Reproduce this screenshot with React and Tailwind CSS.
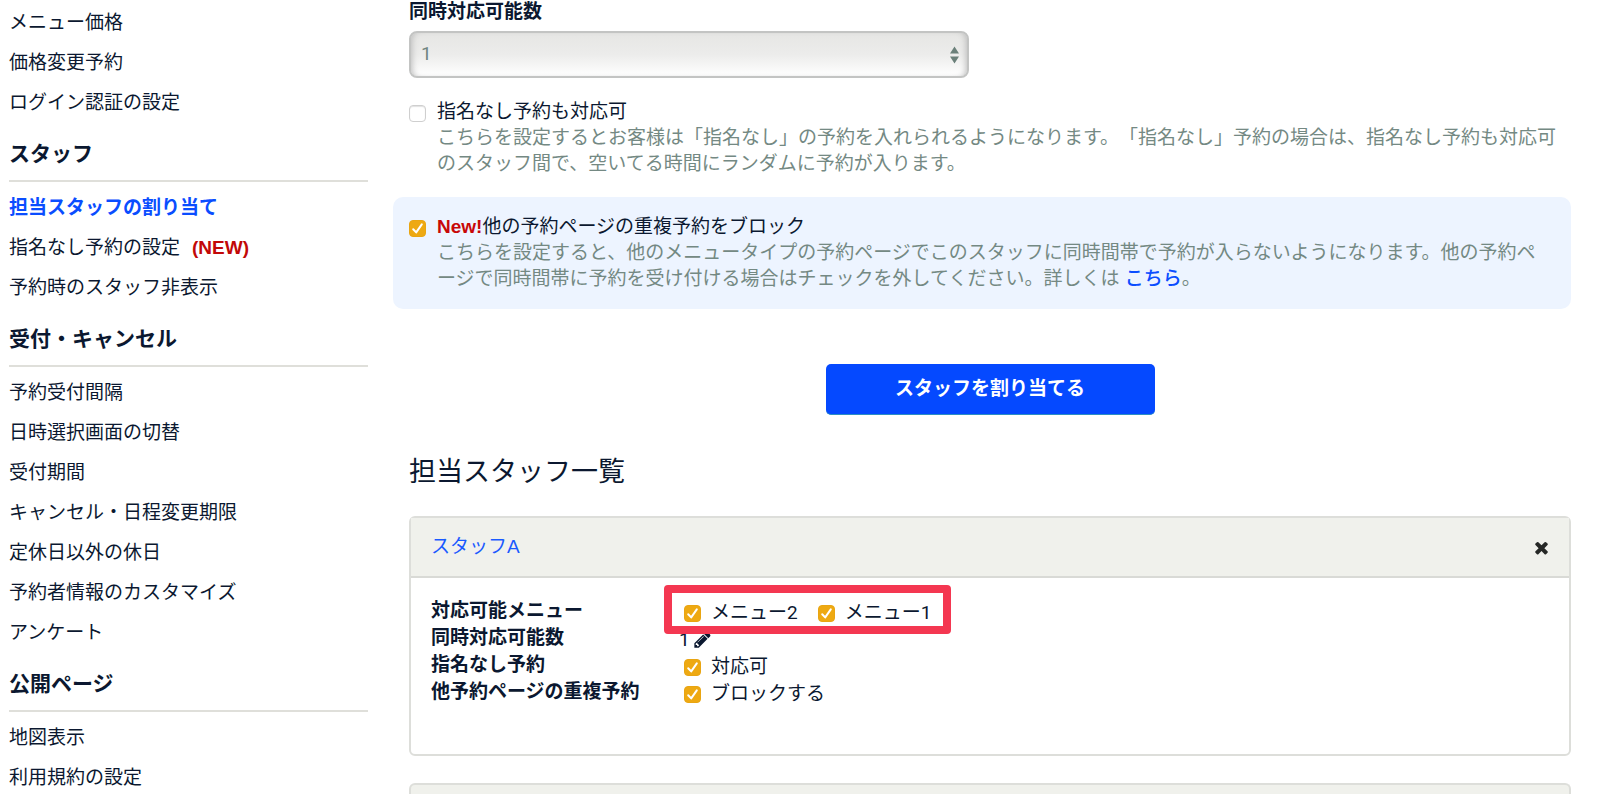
import React, { useState } from 'react'

const menuSections = [
  {
    title: null,
    items: [{ label: 'メニュー価格' }, { label: '価格変更予約' }, { label: 'ログイン認証の設定' }],
  },
  {
    title: 'スタッフ',
    items: [
      { label: '担当スタッフの割り当て', active: true },
      { label: '指名なし予約の設定', isNew: true },
      { label: '予約時のスタッフ非表示' },
    ],
  },
  {
    title: '受付・キャンセル',
    items: [
      { label: '予約受付間隔' },
      { label: '日時選択画面の切替' },
      { label: '受付期間' },
      { label: 'キャンセル・日程変更期限' },
      { label: '定休日以外の休日' },
      { label: '予約者情報のカスタマイズ' },
      { label: 'アンケート' },
    ],
  },
  {
    title: '公開ページ',
    items: [{ label: '地図表示' }, { label: '利用規約の設定' }],
  },
]

function App() {
  return (
    <div
      lang="ja"
      className="flex bg-white pb-2 pl-[9px] pr-[33px] font-['Liberation_Sans','Noto_Sans_CJK_JP',sans-serif] text-[19px] leading-[26px] text-[#0b1830] [text-spacing-trim:space-all]"
    >
      <Sidebar />
      <main className="min-w-0 flex-1 pl-[41px]">
        <StaffForm />
        <h2 className="mt-[39px] text-[27px] leading-9">担当スタッフ一覧</h2>
        <StaffCard name="スタッフA" />
        {/* 次のスタッフ */}
        <div className="mt-[27px] h-[11px] rounded-t-md border-2 border-b-0 border-[#dddeda] bg-[#f0f1ec]" />
      </main>
    </div>
  )
}

// サイドメニュー
function Sidebar() {
  return (
    <nav className="w-[359px] shrink-0 pt-[3px]">
      {menuSections.map((section, i) => (
        <section key={i}>
          {section.title && (
            <h3 className="mb-1.5 border-b-2 border-[#dfdfda] pt-[17px] pb-3 text-[21px] leading-7 font-bold">
              {section.title}
            </h3>
          )}
          <ul>
            {section.items.map((item) => (
              <li key={item.label} className="leading-10">
                <a href="#" className={item.active ? 'font-bold text-[#0a4dff]' : ''}>
                  {item.label}
                </a>
                {item.isNew && <span className="ml-3 font-bold text-[#c20808]">(NEW)</span>}
              </li>
            ))}
          </ul>
        </section>
      ))}
    </nav>
  )
}

// スタッフの割り当てフォーム
function StaffForm() {
  const [capacity, setCapacity] = useState('1')

  return (
    <form onSubmit={(e) => e.preventDefault()}>
      <label htmlFor="capacity" className="block leading-6 font-bold">
        同時対応可能数
      </label>
      <div className="mt-[7px] grid max-w-[560px] items-center">
        <select
          id="capacity"
          value={capacity}
          onChange={(e) => setCapacity(e.target.value)}
          className="col-start-1 row-start-1 h-[47px] appearance-none rounded-lg border-2 border-[#c3c4c3] bg-linear-to-b from-[#e6e6e4] via-[#ececeb] to-white px-[10px] pb-0.5 font-['Roboto',sans-serif] text-[#70857f] shadow-[inset_5px_0_6px_-4px_#bbbbbb,inset_-5px_0_6px_-4px_#bbbbbb]"
        >
          <option value="1">1</option>
          <option value="2">2</option>
          <option value="3">3</option>
        </select>
        <SelectArrows />
      </div>

      <div className="mt-[21px] flex gap-[11px]">
        <Checkbox id="no-nomination" />
        <div>
          <label htmlFor="no-nomination">指名なし予約も対応可</label>
          <p className="text-[#748983]">
            こちらを設定するとお客様は「指名なし」の予約を入れられるようになります。「指名なし」予約の場合は、指名なし予約も対応可のスタッフ間で、空いてる時間にランダムに予約が入ります。
          </p>
        </div>
      </div>

      <div className="mt-5 -ml-4 flex gap-[11px] rounded-[10px] bg-[#edf4ff] py-[17px] pr-6 pl-4">
        <Checkbox id="block-duplicate" defaultChecked />
        <div>
          <label htmlFor="block-duplicate">
            <b className="text-[#c80808]">New!</b>他の予約ページの重複予約をブロック
          </label>
          <p className="text-[#748983] [line-break:anywhere]">
            こちらを設定すると、他のメニュータイプの予約ページでこのスタッフに同時間帯で予約が入らないようになります。他の予約ページで同時間帯に予約を受け付ける場合はチェックを外してください。詳しくは{' '}
            <a href="#" className="font-medium text-[#0a4dff]">こちら</a>。
          </p>
        </div>
      </div>

      <button
        type="submit"
        className="mx-auto mt-[55px] block h-[51px] w-[329px] rounded-[5px] border-b border-[#2b8fc4] bg-[#0549ff] font-bold text-white"
      >
        スタッフを割り当てる
      </button>
    </form>
  )
}

// 担当スタッフのカード
function StaffCard({ name }) {
  return (
    <div className="mt-[26px] rounded-md border-2 border-[#dddeda]">
      <div className="flex h-[60px] items-center justify-between border-b-2 border-[#d9dad6] bg-[#f0f1ec] pr-[18px] pl-5">
        <a href="#" className="text-[#1a5aff]">{name}</a>
        <button type="button" aria-label="削除" className="text-[#262826]">
          <TimesIcon />
        </button>
      </div>
      <dl className="px-5 pt-[19px] pb-[49px] leading-[27px]">
        <StaffRow title="対応可能メニュー">
          <div className="relative flex gap-5 pl-[5px]">
            <CheckItem id="menu-2" label="メニュー2" />
            <CheckItem id="menu-1" label="メニュー1" />
            <div className="pointer-events-none absolute -top-[14px] -right-5 -bottom-2 -left-[15px] rounded-[4px] border-8 border-[#f43751]" />
          </div>
        </StaffRow>
        <StaffRow title="同時対応可能数">
          <div className="flex items-center gap-[3px]">
            1
            <button type="button" aria-label="編集">
              <PencilIcon />
            </button>
          </div>
        </StaffRow>
        <StaffRow title="指名なし予約">
          <div className="pl-[5px]">
            <CheckItem id="row-nomination" label="対応可" />
          </div>
        </StaffRow>
        <StaffRow title="他予約ページの重複予約">
          <div className="pl-[5px]">
            <CheckItem id="row-block" label="ブロックする" />
          </div>
        </StaffRow>
      </dl>
    </div>
  )
}

function StaffRow({ title, children }) {
  return (
    <div className="flex h-[27px]">
      <dt className="w-[248px] shrink-0 font-bold">{title}</dt>
      <dd className="pt-0.5 font-['Roboto','Noto_Sans_CJK_JP',sans-serif]">{children}</dd>
    </div>
  )
}

function CheckItem({ id, label }) {
  return (
    <div className="flex gap-[10px]">
      <Checkbox id={id} defaultChecked />
      <label htmlFor={id}>{label}</label>
    </div>
  )
}

function Checkbox({ id, defaultChecked }) {
  return (
    <span className="mt-1.5 grid size-[17px] shrink-0">
      <input
        id={id}
        type="checkbox"
        defaultChecked={defaultChecked}
        className="peer col-start-1 row-start-1 size-[17px] appearance-none rounded-[4px] border border-[#cfcfcf] bg-white shadow-[inset_0_1px_1px_#e2e2e2] checked:border-[#e9a512] checked:bg-[#eea912] checked:shadow-none"
      />
      <svg
        viewBox="0 0 17 17"
        className="pointer-events-none invisible col-start-1 row-start-1 size-[17px] peer-checked:visible"
        fill="none"
        stroke="white"
        strokeWidth="2"
        strokeLinecap="round"
        strokeLinejoin="round"
      >
        <path d="M4.2 9.2l3 3.2 5.6-8" />
      </svg>
    </span>
  )
}

// アイコン
const SelectArrows = () => (
  <svg
    viewBox="0 0 9 18"
    className="pointer-events-none col-start-1 row-start-1 mr-[10px] h-[18px] w-[9px] justify-self-end"
    fill="#6b807a"
  >
    <path d="M4.5 0.5L9 7.5H0zM4.5 17.5L9 10.5H0z" />
  </svg>
)

const TimesIcon = () => (
  <svg className="size-[19px]" fill="currentColor" viewBox="0 0 1792 1792">
    <path d="M1490 1322q0 40-28 68l-136 136q-28 28-68 28t-68-28l-294-294-294 294q-28 28-68 28t-68-28l-136-136q-28-28-28-68t28-68l294-294-294-294q-28-28-28-68t28-68l136-136q28-28 68-28t68 28l294 294 294-294q28-28 68-28t68 28l136 136q28 28 28 68t-28 68l-294 294 294 294q28 28 28 68z" />
  </svg>
)

const PencilIcon = () => (
  <svg className="size-[19px]" fill="currentColor" viewBox="0 0 1792 1792">
    <path d="M491 1536l91-91-235-235-91 91v107h128v128h107zM1014 608q0-22-22-22-10 0-17 7l-542 542q-7 7-7 17 0 22 22 22 10 0 17-7l542-542q7-7 7-17zM960 416l416 416-832 832h-416v-416zM1643 512q0 53-37 90l-166 166-416-416 166-165q36-38 90-38 53 0 91 38l235 234q37 39 37 91z" />
  </svg>
)

export default App
